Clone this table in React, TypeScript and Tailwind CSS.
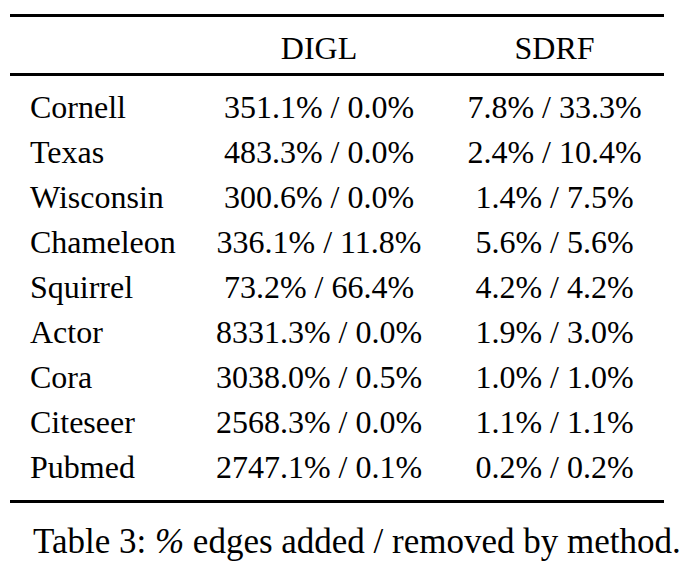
const rows: [string, string, string][] = [
  ["Cornell", "351.1% / 0.0%", "7.8% / 33.3%"],
  ["Texas", "483.3% / 0.0%", "2.4% / 10.4%"],
  ["Wisconsin", "300.6% / 0.0%", "1.4% / 7.5%"],
  ["Chameleon", "336.1% / 11.8%", "5.6% / 5.6%"],
  ["Squirrel", "73.2% / 66.4%", "4.2% / 4.2%"],
  ["Actor", "8331.3% / 0.0%", "1.9% / 3.0%"],
  ["Cora", "3038.0% / 0.5%", "1.0% / 1.0%"],
  ["Citeseer", "2568.3% / 0.0%", "1.1% / 1.1%"],
  ["Pubmed", "2747.1% / 0.1%", "0.2% / 0.2%"],
];

export default function App() {
  return (
    <div className="w-[687px] h-[573px] bg-white text-black font-['Liberation_Serif',serif] text-[32px] overflow-hidden">
      <div className="pt-[14px] pl-[10px]">
        <div className="w-[654px] border-t-[3px] border-b-[3px] border-black">
          <div className="grid grid-cols-[183px_252px_219px] leading-[45px] pt-[9px] pb-[2px] border-b-[3px] border-black">
            <div />
            <div className="text-center">DIGL</div>
            <div className="text-center">SDRF</div>
          </div>
          <div className="pt-[9px] pb-[10px]">
            {rows.map(([name, digl, sdrf]) => (
              <div key={name} className="grid grid-cols-[183px_252px_219px] leading-[45px] h-[45px]">
                <div className="pl-[20px] whitespace-nowrap">{name}</div>
                <div className="text-center whitespace-nowrap">{digl}</div>
                <div className="text-center whitespace-nowrap">{sdrf}</div>
              </div>
            ))}
          </div>
        </div>
      </div>
      <p className="mt-[19px] ml-[33px] text-[35px] leading-[40px] whitespace-nowrap">
        Table 3: <span className="italic">%</span> edges added / removed by method.
      </p>
    </div>
  );
}
